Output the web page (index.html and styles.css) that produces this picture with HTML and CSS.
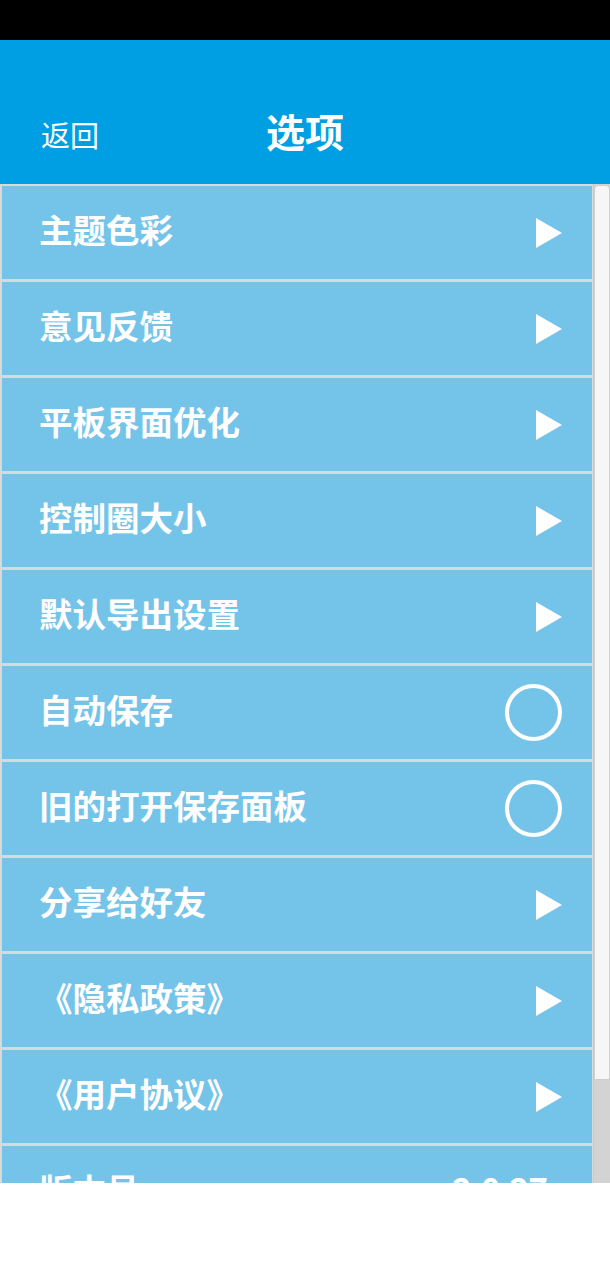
FILE: index.html
```html
<!DOCTYPE html>
<html lang="zh-CN">
<head>
  <meta charset="UTF-8">
  <title>选项</title>
  <link rel="stylesheet" href="styles.css">
</head>
<body>

<div class="status-bar"></div>

<header class="topbar">
  <span class="back">返回</span>
  <h1>选项</h1>
  <span></span>
</header>

<div class="panel">
  <ul class="options">
    <li class="option"><span class="label">主题色彩</span><i class="arrow"></i></li>
    <li class="option"><span class="label">意见反馈</span><i class="arrow"></i></li>
    <li class="option"><span class="label">平板界面优化</span><i class="arrow"></i></li>
    <li class="option"><span class="label">控制圈大小</span><i class="arrow"></i></li>
    <li class="option"><span class="label">默认导出设置</span><i class="arrow"></i></li>
    <li class="option"><span class="label">自动保存</span><i class="toggle"></i></li>
    <li class="option"><span class="label">旧的打开保存面板</span><i class="toggle"></i></li>
    <li class="option"><span class="label">分享给好友</span><i class="arrow"></i></li>
    <li class="option"><span class="label">《隐私政策》</span><i class="arrow"></i></li>
    <li class="option"><span class="label">《用户协议》</span><i class="arrow"></i></li>
    <li class="option version"><span class="label">版本号</span><span class="label num">2.0.27</span></li>
  </ul>
  <div class="scrollbar">
    <div class="thumb"></div>
  </div>
</div>

</body>
</html>
```

FILE: styles.css
```css
body {
  margin: 0;
  background: #fff;
  font-family: "Noto Sans CJK SC", "Noto Sans", sans-serif;
  color: #fff;
}
.status-bar {
  height: 40px;
  background: #000;
}
.topbar {
  height: 144px;
  background: #009fe3;
  display: grid;
  grid-template-columns: 1fr auto 1fr;
  align-items: end;
  padding-bottom: 34px;
  box-sizing: border-box;
}
.back {
  font-size: 29px;
  line-height: 1;
  padding-left: 41px;
  padding-bottom: 1px;
}
.topbar h1 {
  margin: 0;
  font-size: 39px;
  line-height: 1;
  font-weight: bold;
}
.panel {
  height: 999px;
  display: flex;
  background: #d9d9d9;
  overflow: hidden;
}
.options {
  flex: 1;
  list-style: none;
  margin: 0;
  padding: 2px 1px 0 2px;
  display: flex;
  flex-direction: column;
  gap: 3px;
}
.option {
  flex: 0 0 93px;
  background: #74c4ea;
  display: flex;
  align-items: center;
  justify-content: space-between;
  padding: 0 30px 0 37px;
  font-size: 33.5px;
  font-weight: bold;
}
.label {
  padding-bottom: 8px;
}
.arrow {
  width: 0;
  height: 0;
  border-top: 15px solid transparent;
  border-bottom: 15px solid transparent;
  border-left: 26px solid #fff;
}
.toggle {
  width: 49px;
  height: 49px;
  border: 4px solid #fff;
  border-radius: 50%;
}
.version .num {
  padding-right: 15px;
  letter-spacing: -1px;
}
.scrollbar {
  width: 17px;
  background: #d3d3d3;
  border-left: 1px solid #c9c9c9;
  box-sizing: border-box;
}
.thumb {
  height: 893px;
  margin-top: 1px;
  background: #f6f6f6;
  border: 1px solid #cfcfcf;
  border-radius: 4px 4px 0 0;
}
```
